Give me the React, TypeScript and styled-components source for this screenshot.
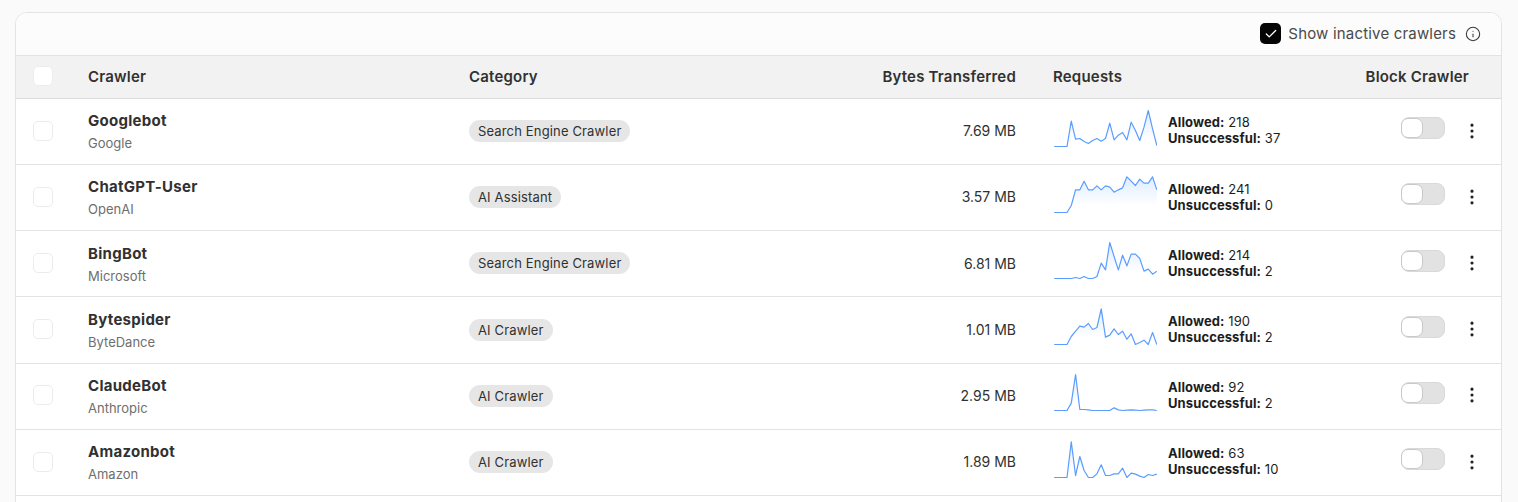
import React from "react";
import styled, { createGlobalStyle } from "styled-components";
import { Check, Info, MoreVertical } from "lucide-react";

interface Crawler {
    name: string;
    owner: string;
    category: string;
    bytes: string;
    allowed: number;
    unsuccessful: number;
    points: number[];
}

const crawlers: Crawler[] = [
    {
        name: "Googlebot",
        owner: "Google",
        category: "Search Engine Crawler",
        bytes: "7.69 MB",
        allowed: 218,
        unsuccessful: 37,
        points: [138, 138, 138, 138, 62, 116, 114, 123, 129, 120, 114, 122, 114, 68, 118, 104, 96, 118, 65, 90, 120, 80, 30, 85, 135],
    },
    {
        name: "ChatGPT-User",
        owner: "OpenAI",
        category: "AI Assistant",
        bytes: "3.57 MB",
        allowed: 241,
        unsuccessful: 0,
        points: [138, 138, 138, 138, 117, 70, 70, 44, 70, 70, 58, 70, 58, 62, 77, 70, 64, 31, 44, 57, 38, 50, 50, 31, 70],
    },
    {
        name: "BingBot",
        owner: "Microsoft",
        category: "Search Engine Crawler",
        bytes: "6.81 MB",
        allowed: 214,
        unsuccessful: 2,
        points: [138, 138, 138, 138, 138, 135, 138, 132, 138, 138, 132, 92, 112, 30, 72, 112, 68, 100, 65, 65, 78, 116, 110, 125, 116],
    },
    {
        name: "Bytespider",
        owner: "ByteDance",
        category: "AI Crawler",
        bytes: "1.01 MB",
        allowed: 190,
        unsuccessful: 2,
        points: [138, 138, 138, 138, 114, 98, 83, 86, 75, 93, 87, 31, 116, 110, 91, 108, 98, 122, 106, 138, 132, 125, 138, 102, 138],
    },
    {
        name: "ClaudeBot",
        owner: "Anthropic",
        category: "AI Crawler",
        bytes: "2.95 MB",
        allowed: 92,
        unsuccessful: 2,
        points: [138, 138, 138, 138, 116, 30, 135, 135, 136, 138, 138, 138, 138, 138, 130, 136, 138, 137, 136, 137, 138, 137, 136, 136, 138],
    },
    {
        name: "Amazonbot",
        owner: "Amazon",
        category: "AI Crawler",
        bytes: "1.89 MB",
        allowed: 63,
        unsuccessful: 10,
        points: [138, 138, 138, 138, 31, 132, 75, 117, 138, 138, 127, 100, 132, 132, 127, 127, 110, 138, 125, 128, 134, 138, 129, 132, 128],
    },
];

const COLUMNS = "72px 381px 250px 297px 1fr";

const GlobalStyle = createGlobalStyle`
    html, body {
        margin: 0;
        height: 502px;
        overflow: hidden;
        background: #fafafa;
        font-family: Inter, "Liberation Sans", sans-serif;
        color: #313131;
    }
`;

const Page = styled.div`
    padding: 12px 16px 0 15px;
`;

const Card = styled.div`
    border: 1px solid #e3e3e3;
    border-radius: 12px;
    background: #fff;
    overflow: hidden;
`;

const Toolbar = styled.div`
    height: 41px;
    padding: 0 20px 1px 0;
    display: flex;
    align-items: center;
    justify-content: flex-end;
    background: #fcfcfc;
    border-bottom: 1px solid #e3e3e3;
    font-size: 15px;
    color: #4a4a4a;
    letter-spacing: 0.18px;
`;

const ToolbarCheck = styled.span`
    width: 21px;
    height: 21px;
    border-radius: 5px;
    background: #050505;
    color: #fff;
    display: flex;
    align-items: center;
    justify-content: center;
    margin-right: 7px;
`;

const InfoWrap = styled.span`
    display: flex;
    margin-left: 9px;
    color: #3a3a3a;
`;

const HeaderRow = styled.div`
    height: 40.8px;
    padding-bottom: 1px;
    display: grid;
    grid-template-columns: ${COLUMNS};
    align-items: center;
    background: #f2f2f2;
    border-bottom: 1px solid #dcdcdc;
    font-size: 15px;
    font-weight: 600;
    letter-spacing: 0.2px;
`;

const Row = styled.div`
    height: 63.8px;
    padding-bottom: 1.4px;
    display: grid;
    grid-template-columns: ${COLUMNS};
    align-items: center;
    border-bottom: 1px solid #e3e3e3;
`;

const CheckCell = styled.div`
    padding-left: 17px;
`;

const Box = styled.span`
    display: block;
    width: 18px;
    height: 18px;
    background: #fff;
    border: 1px solid #ececec;
    border-radius: 5px;
`;

const NameCell = styled.div`
    display: flex;
    flex-direction: column;
    gap: 5px;
    margin-top: 2px;
`;

const Name = styled.span`
    font-size: 15px;
    line-height: 18px;
    font-weight: 700;
    letter-spacing: 0.28px;
`;

const Owner = styled.span`
    font-size: 13px;
    line-height: 16px;
    color: #6e6e6e;
`;

const Badge = styled.span`
    justify-self: start;
    height: 22px;
    line-height: 22px;
    margin-top: 0.6px;
    padding: 0 9px;
    border-radius: 11px;
    background: #e6e6e6;
    font-size: 13px;
    font-weight: 400;
    letter-spacing: 0.15px;
`;

const Bytes = styled.div`
    text-align: right;
    font-size: 14px;
`;

const RightHead = styled.div`
    text-align: right;
`;

const HeadLast = styled.div`
    display: flex;
    justify-content: space-between;
    padding: 0 32px 0 37px;
`;

const LastCell = styled.div`
    display: flex;
    align-items: center;
    padding: 0 19px 0 38px;
`;

const Chart = styled.svg`
    display: block;
    flex: none;
    margin-top: 2px;
`;

const Stats = styled.div`
    margin-left: 11px;
    font-size: 13px;
    line-height: 16px;
    color: #1d1d1d;
    letter-spacing: 0.1px;
    flex: 1;
    margin-bottom: 0.5px;
`;

const StatLabel = styled.b`
    font-weight: 700;
`;

const Toggle = styled.span`
    width: 44px;
    height: 22px;
    box-sizing: border-box;
    border: 1px solid #d9d9d9;
    border-radius: 8px;
    background: #e2e2e2;
    display: flex;
    margin-bottom: 5px;
`;

const Knob = styled.span`
    width: 22px;
    height: 20px;
    box-sizing: border-box;
    background: #fff;
    border: 1px solid #c9c9c9;
    border-radius: 7px;
    margin-left: -1px;
`;

const Kebab = styled.span`
    display: flex;
    margin-left: 17px;
    color: #222;
`;

const Sparkline: React.FC<{ points: number[]; id: string }> = ({ points, id }) => {
    const step = 308 / (points.length - 1);
    const line = points.map((y, i) => `${(i * step).toFixed(1)},${y}`).join(" ");
    return (
        <Chart width={103} height={50} viewBox="0 19.5 308 150">
            <defs>
                <linearGradient id={id} x1="0" y1="0" x2="0" y2="1">
                    <stop offset="0" stopColor="#4b96ff" stopOpacity={0.18} />
                    <stop offset="0.8" stopColor="#4b96ff" stopOpacity={0} />
                </linearGradient>
            </defs>
            <polygon points={`0,140 ${line} 308,140`} fill={`url(#${id})`} />
            <polyline points={line} fill="none" stroke="#5a9dff" strokeWidth={3.6} strokeLinejoin="round" />
        </Chart>
    );
};

const App: React.FC = () => {
    return (
        <Page>
            <GlobalStyle />
            <Card>
                <Toolbar>
                    <ToolbarCheck>
                        <Check size={14} strokeWidth={2.2} />
                    </ToolbarCheck>
                    Show inactive crawlers
                    <InfoWrap>
                        <Info size={16} strokeWidth={1.6} />
                    </InfoWrap>
                </Toolbar>
                <HeaderRow>
                    <CheckCell>
                        <Box />
                    </CheckCell>
                    <div>Crawler</div>
                    <div>Category</div>
                    <RightHead>Bytes Transferred</RightHead>
                    <HeadLast>
                        <span>Requests</span>
                        <span>Block Crawler</span>
                    </HeadLast>
                </HeaderRow>
                {crawlers.map((crawler, index) => (
                    <Row key={crawler.name}>
                        <CheckCell>
                            <Box />
                        </CheckCell>
                        <NameCell>
                            <Name>{crawler.name}</Name>
                            <Owner>{crawler.owner}</Owner>
                        </NameCell>
                        <Badge>{crawler.category}</Badge>
                        <Bytes>{crawler.bytes}</Bytes>
                        <LastCell>
                            <Sparkline points={crawler.points} id={`spark-${index}`} />
                            <Stats>
                                <div>
                                    <StatLabel>Allowed:</StatLabel> {crawler.allowed}
                                </div>
                                <div>
                                    <StatLabel>Unsuccessful:</StatLabel> {crawler.unsuccessful}
                                </div>
                            </Stats>
                            <Toggle>
                                <Knob />
                            </Toggle>
                            <Kebab>
                                <MoreVertical size={20} strokeWidth={1.8} />
                            </Kebab>
                        </LastCell>
                    </Row>
                ))}
                <Row />
            </Card>
        </Page>
    );
};

export default App;
